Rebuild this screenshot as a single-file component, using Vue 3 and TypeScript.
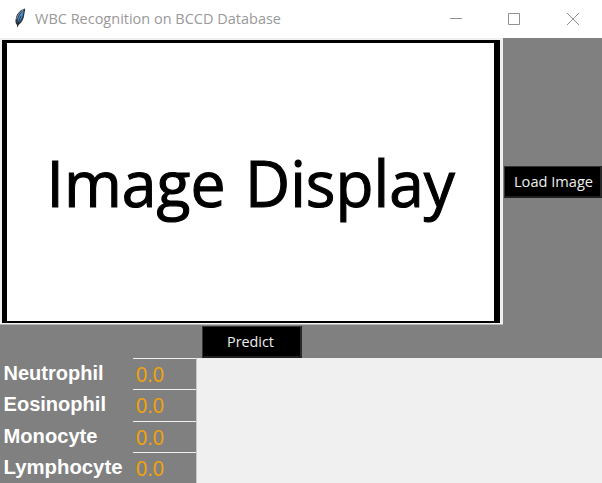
<script setup lang="ts">
interface CellResult {
  name: string
  width: number
  value: string
}

const results: CellResult[] = [
  { name: 'Neutrophil', width: 100, value: '0.0' },
  { name: 'Eosinophil', width: 102.5, value: '0.0' },
  { name: 'Monocyte', width: 94, value: '0.0' },
  { name: 'Lymphocyte', width: 119, value: '0.0' },
]
</script>

<template>
  <div class="window">
    <header class="titlebar">
      <svg class="feather" width="14" height="22" viewBox="0 0 14 22">
        <path d="M12 .5C8 1.500 4.200 5 3 9.500C2 13 2.300 15.500 4 17L4.600 19.500L5.500 17C9 14.500 10.800 11 11.200 7C11.400 4.500 12.400 3 12 .5Z" fill="#2b3640" />
        <path d="M10.800 2.500C8 4.200 5.600 7.500 4.900 11.500L4.700 15C7.800 13 9.700 9 10 6Z" fill="#4a8ad0" />
        <path d="M10.600 1.800C7.600 3.500 4.500 6.800 3.500 11.200" fill="none" stroke="#8f9ba5" />
        <path d="M8 8C6.500 11 5.200 14 4.500 18.500" fill="none" stroke="#17232e" stroke-width=".8" />
      </svg>
      <svg class="title" width="262" height="28">
        <text x="0" y="20" textLength="246" lengthAdjust="spacingAndGlyphs">WBC Recognition on BCCD Database</text>
      </svg>
      <div class="controls">
        <svg width="12" height="12"><path d="M0 5.500H12" /></svg>
        <svg width="12" height="12"><path d="M.5 .5H11.500V11.500H.5Z" /></svg>
        <svg width="12" height="12"><path d="M0 0L12 12M12 0L0 12" /></svg>
      </div>
    </header>
    <main class="top">
      <div class="frame">
        <div class="picture">
          <svg width="486" height="278">
            <text x="39.500" y="163.500" textLength="179" lengthAdjust="spacingAndGlyphs">Image</text>
            <text x="238" y="163.500" textLength="210" lengthAdjust="spacingAndGlyphs">Display</text>
          </svg>
        </div>
      </div>
      <div class="side">
        <button class="load">
          <svg width="96" height="30"><text x="9" y="20" textLength="79" lengthAdjust="spacingAndGlyphs">Load Image</text></svg>
        </button>
      </div>
    </main>
    <div class="actions">
      <button class="predict">
        <svg width="96" height="30"><text x="24" y="20" textLength="47" lengthAdjust="spacingAndGlyphs">Predict</text></svg>
      </button>
    </div>
    <section class="results">
      <div v-for="r in results" :key="r.name" class="row">
        <svg class="name" width="133" height="31">
          <text x="3.500" y="22" :textLength="r.width" lengthAdjust="spacingAndGlyphs">{{ r.name }}</text>
        </svg>
        <div class="value">
          <svg width="63" height="29"><text x="3" y="23" textLength="28" lengthAdjust="spacingAndGlyphs">{{ r.value }}</text></svg>
        </div>
      </div>
    </section>
  </div>
</template>

<style>
body {
  margin: 0;
  overflow: hidden;
}
</style>

<style scoped>
.window {
  width: 602px;
  height: 483px;
  overflow: hidden;
  background: #f0f0f0;
}
svg {
  display: block;
}
.titlebar {
  box-sizing: border-box;
  height: 38px;
  display: flex;
  align-items: flex-start;
  padding: 4px 23px 0 13px;
  background: #fff;
}
.feather {
  margin-top: 4px;
}
.title {
  margin-left: 8px;
}
.title text {
  font: 15px "Open Sans", sans-serif;
  fill: #999;
}
.controls {
  display: flex;
  gap: 47px;
  margin: 9px 0 0 auto;
}
.controls svg:first-child {
  margin-right: -1px;
}
.controls path {
  fill: none;
  stroke: #919191;
}
.top {
  display: flex;
  height: 287px;
}
.frame {
  box-sizing: border-box;
  width: 503px;
  height: 287px;
  padding: 2px 3px 2px 2px;
  background: #f0f0f0;
  border-bottom: 1px solid #b8b8b8;
}
.picture {
  box-sizing: border-box;
  width: 498px;
  height: 283px;
  border: solid #000;
  border-width: 3px 6px 2px 5px;
  background: #fff;
}
.picture text {
  font: 64px "Open Sans", sans-serif;
  fill: #000;
  stroke: #000;
  stroke-width: 1.1px;
}
.side {
  box-sizing: border-box;
  width: 99px;
  padding: 128px 0 0 1px;
  background: #808080;
}
button {
  box-sizing: border-box;
  display: block;
  margin: 0;
  padding: 0;
  border: solid #111;
  border-width: 1px 2px 2px 1px;
  border-color: #333 #292929 #202020 #333;
  background: #000;
  overflow: hidden;
}
button text {
  font: 15px "Open Sans", sans-serif;
  fill: #eee;
}
.load {
  width: 98px;
  height: 32px;
}
.actions {
  box-sizing: border-box;
  height: 33px;
  padding: 1px 0 0 202px;
  background: #808080;
}
.predict {
  width: 100px;
  height: 32px;
}
.results {
  width: 196px;
  background: #808080;
  border-right: 1px solid #c8c8c8;
}
.row {
  display: flex;
  height: 31.330px;
}
.name text {
  font: bold 20px "Liberation Sans", sans-serif;
  fill: #fff;
}
.value {
  width: 63px;
  border-top: 1px solid #f0f0f0;
}
.value text {
  font: 21.500px "Liberation Sans", sans-serif;
  fill: #f0a30a;
}
</style>
